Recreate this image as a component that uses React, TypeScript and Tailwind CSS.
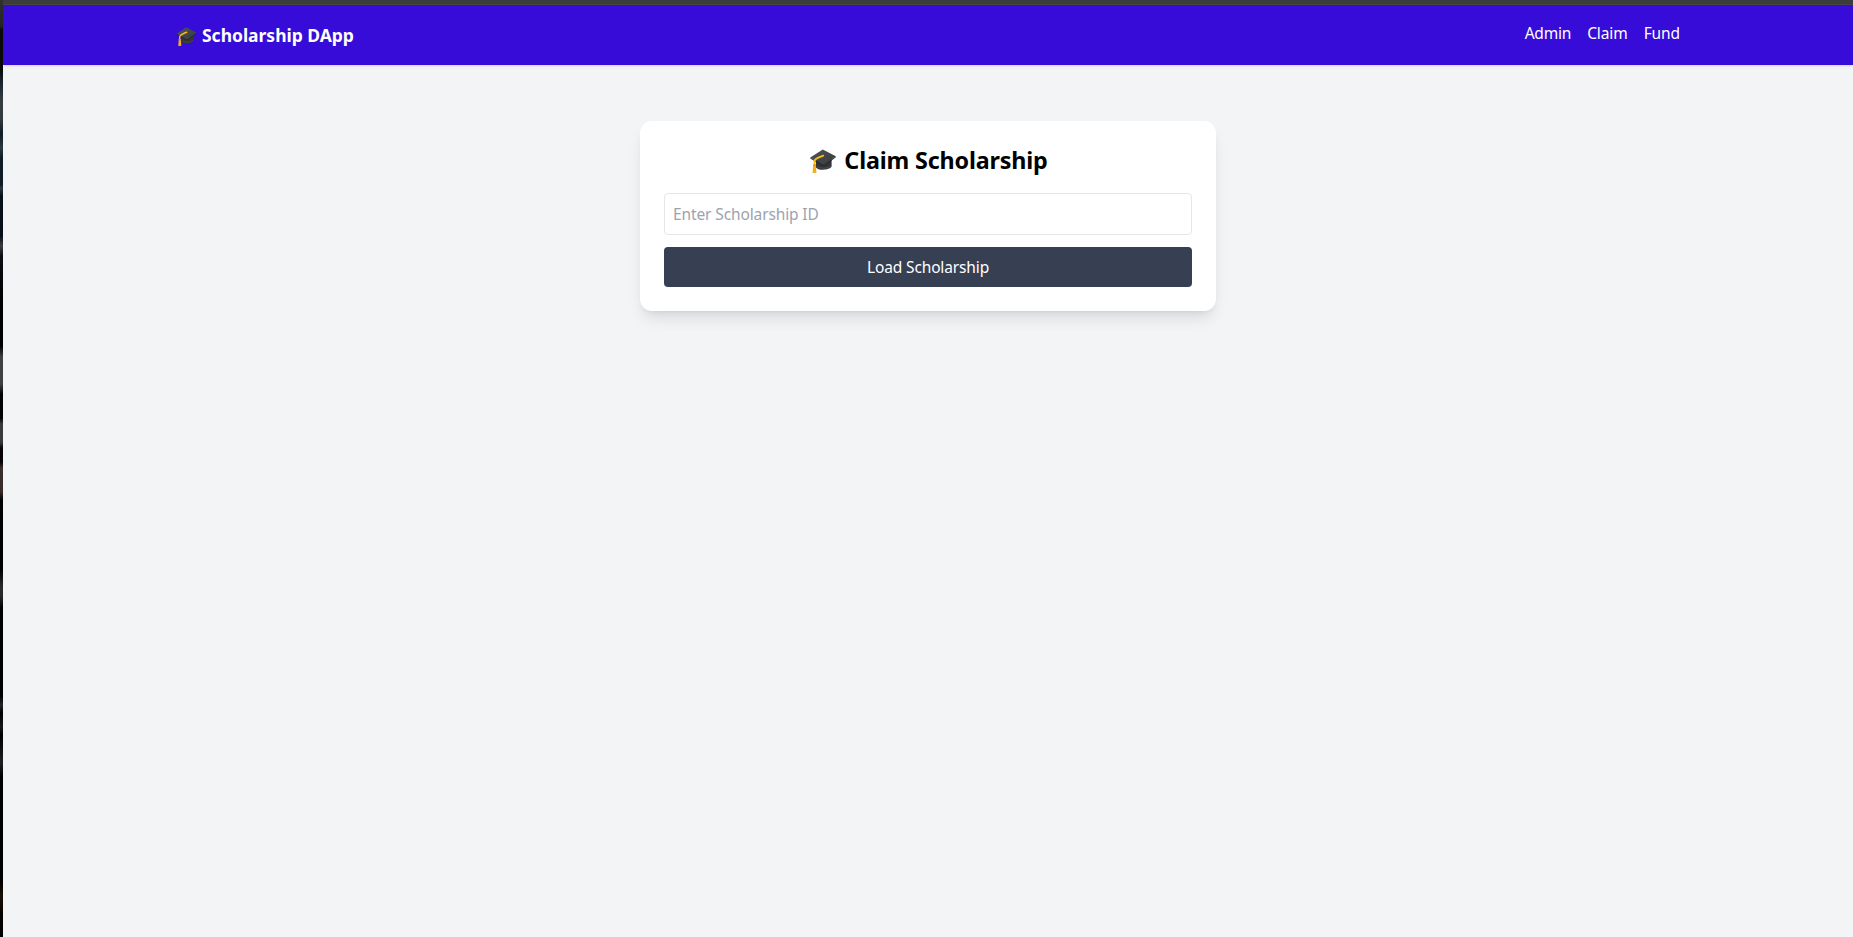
import { useId } from "react";

function GraduationCap({ className }: { className: string }) {
  const id = useId();
  return (
    <svg viewBox="0 0 26 24" className={className} aria-hidden="true">
      <defs>
        <linearGradient id={id} x1="0" y1="0" x2="1" y2="1">
          <stop offset="0" stopColor="#505355" />
          <stop offset="1" stopColor="#383b3d" />
        </linearGradient>
      </defs>
      <path d="M5.8 10v8.2c1.8 3.6 13.6 3.4 15.8-.6V9z" fill="#323436" />
      <path d="M7 17.3c3 2.6 11 2.6 14.2-.6" stroke="#55585a" strokeWidth=".7" fill="none" />
      <path d="M.3 8.5 12.8.4 25.8 7.3 13.8 16.2z" fill={`url(#${id})`} />
      <path d="M.3 8.5 13.8 16.2 25.8 7.3v.9L13.8 17.4.3 9.4z" fill="#26282a" />
      <path d="M13.2 6.6C9.5 8.2 5.8 9.2 4.8 11.2c-.5 1.5-.4 3.4-.5 5" stroke="#f6bd18" strokeWidth="1.8" fill="none" strokeLinecap="round" />
      <path d="M3.3 15.3h2.4l.8 8.2c-1.2.7-2.9.7-3.9.2z" fill="#f4ae10" />
      <path d="M3.3 16.3h2.4" stroke="#c98207" strokeWidth=".8" />
    </svg>
  );
}

const wallpaper =
  "bg-[linear-gradient(to_bottom,#303030_0px,#262626_26px,#0b0b0b_30px,#0b0b0b_70px,#14212b_80px,#353c40_100px,#353c40_118px,#0e1c27_134px,#2b3942_148px,#0e1c27_158px,#101c27_185px,#2b3740_188px,#07101a_196px,#090e18_236px,#3b3d40_246px,#0a0d14_256px,#010101_300px,#000_346px,#404040_357px,#404040_384px,#050304_394px,#040304_418px,#3a3a3a_424px,#3a3a3a_442px,#080405_448px,#060304_462px,#3a2e2e_468px,#3a2a2c_492px,#020202_500px,#000_570px,#292929_586px,#292929_596px,#000_608px,#000_696px,#252525_705px,#000_713px,#181818_727px,#000_735px,#202020_763px,#000_777px,#000_882px,#181006_896px,#050301_914px,#000_937px)]";

export default function App() {
  return (
    <div className="flex h-screen flex-col overflow-hidden bg-[#f3f4f6] font-['Noto_Sans',sans-serif]">
      <div className="flex min-h-0 flex-1">
        <div className={`w-[3px] shrink-0 ${wallpaper}`} />
        <div className="flex min-w-0 flex-1 flex-col">
          <div className="h-[5px] shrink-0 border-b border-[#454943] bg-[#3c3c3c]" />
          <nav className="h-[60px] shrink-0 bg-[#370cd8] text-white shadow">
            <div className="mx-auto flex h-full max-w-[1536px] justify-between p-4">
              <h1 className="flex h-7 items-center text-[17.5px] font-bold">
                <GraduationCap className="mt-0.5 mr-[5px] h-[19px] w-[21px]" />
                <span className="whitespace-nowrap tracking-[-0.02px]">Scholarship DApp</span>
              </h1>
              <div className="flex items-center gap-4 pb-0.5 text-[15.5px]">
                <a className="tracking-[-0.2px]">Admin</a>
                <a className="tracking-[-0.1px]">Claim</a>
                <a className="tracking-[-0.1px]">Fund</a>
              </div>
            </div>
          </nav>
          <main className="flex justify-center pt-14">
            <section className="w-[576px] rounded-xl bg-white p-6 shadow-lg">
              <h2 className="mb-4 flex h-8 items-center justify-center pl-0.5 text-[23.3px] font-bold text-black">
                <GraduationCap className="mr-2 h-6 w-[26px]" />
                <span className="whitespace-nowrap pb-0.5 tracking-[-0.16px]">Claim Scholarship</span>
              </h2>
              <input
                placeholder="Enter Scholarship ID"
                className="mb-3 block h-[42px] w-full rounded border border-gray-200 p-2 text-[15.5px] tracking-[-0.12px] placeholder:text-[#9ca3af]"
              />
              <button className="block h-10 w-full rounded bg-[#374053] pt-0.5 text-[15.5px] text-white">
                <span className="tracking-[-0.14px]">Load Scholarship</span>
              </button>
            </section>
          </main>
        </div>
      </div>
    </div>
  );
}
